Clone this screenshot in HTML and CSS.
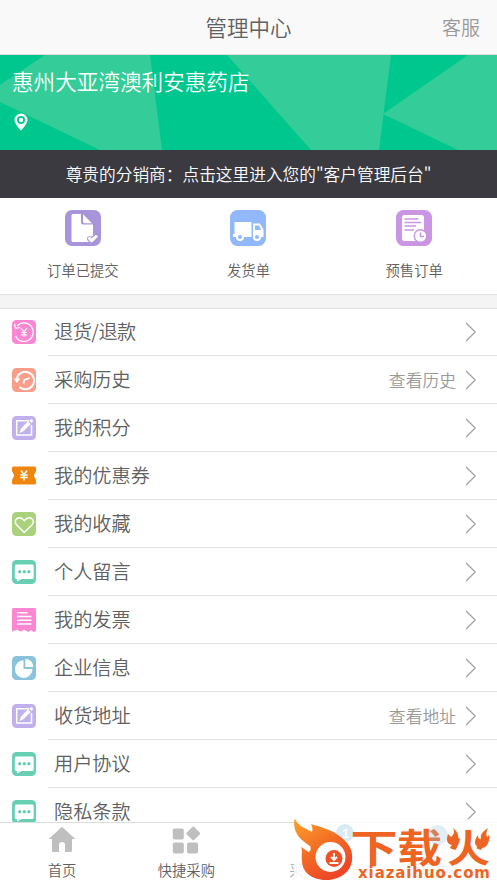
FILE: index.html
```html
<!DOCTYPE html>
<html lang="zh-CN">
<head>
<meta charset="utf-8">
<title>管理中心</title>
<link rel="stylesheet" href="styles.css">
</head>
<body>
<svg width="0" height="0" class="defs">
  <symbol id="chev" viewBox="0 0 12 20"><path d="M1.200 1 10.200 10 1.200 19" fill="none" stroke="#a2a2a2" stroke-width="1.200"/></symbol>
  <symbol id="edit" viewBox="0 0 24 24"><rect width="24" height="24" rx="4.500" fill="#c1b0eb"/><path d="M17 4.700H4.700v14.200h14.800V9" fill="none" stroke="#fff" stroke-width="1.500"/><path d="m7.500 17 1.300-4.300 7.200-7.400 2.700 2.700-7.300 7.300z" fill="#fff"/><path d="m17.300 4.700 1.200-1.200q1-.7 2 .3t.3 2l-1.200 1.300z" fill="#fff"/></symbol>
  <symbol id="chat" viewBox="0 0 24 24"><rect width="24" height="24" rx="4.500" fill="#67cfb4"/><path d="M4 4.500h16.200q1.500 0 1.500 1.500v11.500q0 1.500-1.500 1.500H9.500L5.500 21.500 4.700 19Q2.800 19 2.800 17.500V6Q2.800 4.500 4 4.500z" fill="#fff"/><g fill="#67cfb4"><circle cx="7.700" cy="11.700" r="1.700"/><circle cx="12.300" cy="11.700" r="1.700"/><circle cx="16.900" cy="11.700" r="1.700"/></g></symbol>
</svg>
<div class="app">
  <header class="top"><span></span><h1>管理中心</h1><a class="service">客服</a></header>
  <section class="shop">
    <svg class="facets" viewBox="0 0 497 95" preserveAspectRatio="none"><path fill="#34cd99" d="M45 0H150L162 95H100L0 47V30zM227 0H391L379 95H311zM468 0H497V95H458L383 59z"/></svg>
    <div class="shop-body">
      <h2>惠州大亚湾澳利安惠药店</h2>
      <svg class="pin" viewBox="0 0 14 18"><path fill="#fff" fill-rule="evenodd" d="M7 .5A6.500 6.500 0 0 0 .5 7C.5 11 7 17.500 7 17.500S13.500 11 13.500 7A6.500 6.500 0 0 0 7 .5zm0 2.500a4 4 0 1 1 0 8 4 4 0 0 1 0-8z"/><circle cx="7" cy="7" r="2.200" fill="#fff"/></svg>
    </div>
  </section>
  <div class="notice">尊贵的分销商：点击这里进入您的"客户管理后台"</div>
  <nav class="orders">
    <a><svg viewBox="0 0 36 36"><rect width="36" height="36" rx="7" fill="#a894d8"/><path d="M8 4h8v8.500q0 2 2 2h10V26l-2 .5q-4-1-4 2.500 0 1.500 2 3H8q-1.500 0-1.500-1.500v-25Q6.500 4 8 4z" fill="#fff"/><path d="m18 4.200 9 9h-7.500q-1.500 0-1.500-1.500zM23 28q1.500-2 3.500.5l4-3.500q2 0 2.500 1.500l-6 6q-4-2-4-4.500z" fill="#fff"/></svg><span>订单已提交</span></a>
    <a><svg viewBox="0 0 36 36"><rect width="36" height="36" rx="7.500" fill="#90b8fa"/><path d="M4.500 12h17v15H3v-3h1.500zM23 13.500h7l3.500 6V27H23z" fill="#fff"/><path d="M25 15.500h4l2.200 4.500H25z" fill="#90b8fa"/><g fill="#90b8fa" stroke="#fff" stroke-width="2"><circle cx="10" cy="27" r="3"/><circle cx="27" cy="27" r="3"/></g></svg><span>发货单</span></a>
    <a><svg viewBox="0 0 36 36"><rect width="36" height="36" rx="7.500" fill="#ca96e3"/><rect x="6" y="5" width="22" height="26" rx="2.500" fill="#fff"/><path d="M8.500 9h14M8.500 12.500H25M8.500 16H20M8.500 20h9.500" stroke="#ca96e3" stroke-width="1.400"/><circle cx="24.500" cy="26" r="7" fill="#ca96e3"/><circle cx="24.500" cy="26" r="5.600" fill="#fff"/><path d="M24.500 22.500V26.500H28" fill="none" stroke="#ca96e3" stroke-width="1.500"/></svg><span>预售订单</span></a>
  </nav>
  <main class="menu">
    <a class="row"><svg class="ico" viewBox="0 0 24 24"><rect width="24" height="24" rx="4.500" fill="#fb86d2"/><path d="M5.200 5.800A9.300 9.300 0 1 1 3.500 16M2.500 3.800 3.500 8.300l4.500-.8" fill="none" stroke="#fff" stroke-width="1.200"/><path d="m9 8 3 4 3-4M12 12v5M9 12.500h6M9 14.800h6" fill="none" stroke="#fff" stroke-width="1.200"/></svg><div class="cell"><b class="tight">退货/退款</b><svg class="chev"><use href="#chev"/></svg></div></a>
    <a class="row"><svg class="ico" viewBox="0 0 24 24"><rect width="24" height="24" rx="4.500" fill="#fb9d89"/><path d="M4.800 11A8.700 8.700 0 1 1 7.500 19" fill="none" stroke="#fff" stroke-width="2"/><path d="M1.500 10.500h7L4.800 15z" fill="#fff"/><path d="m11.500 15.500 1-3.500 5-2" fill="none" stroke="#fff" stroke-width="1.800"/></svg><div class="cell"><b>采购历史</b><i>查看历史</i><svg class="chev"><use href="#chev"/></svg></div></a>
    <a class="row"><svg class="ico"><use href="#edit"/></svg><div class="cell"><b>我的积分</b><svg class="chev"><use href="#chev"/></svg></div></a>
    <a class="row"><svg class="ico" viewBox="0 0 24 24"><path d="M1.500 2.500h21Q24 2.500 24 4v3.500l-1 1v1l-1 1v2l1 1v1l1 1V19q0 1.500-1.500 1.500h-21Q0 20.500 0 19v-3.500l1-1v-1l1-1v-2l-1-1v-1l-1-1V4Q0 2.500 1.500 2.500z" fill="#ef860e"/><path d="m9 6.500 3 4 3-4M12 10.500v6M8.300 11h7.400M8.300 13.500h7.400" fill="none" stroke="#fff" stroke-width="1.500"/></svg><div class="cell"><b>我的优惠券</b><svg class="chev"><use href="#chev"/></svg></div></a>
    <a class="row"><svg class="ico" viewBox="0 0 24 24"><rect width="24" height="24" rx="4.500" fill="#aad27d"/><path d="M12.300 20.500 4.500 12.800C1.500 9 4.500 5.700 7.500 5.700q2.500 0 4.800 3 2.300-3 4.800-3c3 0 6 3.300 3 7.100z" fill="none" stroke="#fff" stroke-width="1.400"/></svg><div class="cell"><b>我的收藏</b><svg class="chev"><use href="#chev"/></svg></div></a>
    <a class="row"><svg class="ico"><use href="#chat"/></svg><div class="cell"><b>个人留言</b><svg class="chev"><use href="#chev"/></svg></div></a>
    <a class="row"><svg class="ico" viewBox="0 0 24 24"><path d="M1.500 0h21Q24 0 24 1.500V23l-2.500 1-2.500-2-2.500 2-2-1-2.500-1.500-2.500 2-2.500-.5-2-1.500-2 1.500L2.500 22 0 24V1.500Q0 0 1.500 0z" fill="#fb86d2"/><path d="M5 4.700h10.500M5 8.500h14.500M5 12.200h14.500M5 16h14.500" stroke="#fff" stroke-width="1.400"/></svg><div class="cell"><b>我的发票</b><svg class="chev"><use href="#chev"/></svg></div></a>
    <a class="row"><svg class="ico" viewBox="0 0 24 24"><rect width="24" height="24" rx="4.500" fill="#89c4dc"/><path d="M11.500 4.300V13H20.500A8.800 8.800 0 1 1 11.500 4.300z" fill="#fff"/><path d="M13.300 3v8h8A8 8 0 0 0 13.300 3z" fill="#fff"/></svg><div class="cell"><b>企业信息</b><svg class="chev"><use href="#chev"/></svg></div></a>
    <a class="row"><svg class="ico"><use href="#edit"/></svg><div class="cell"><b>收货地址</b><i>查看地址</i><svg class="chev"><use href="#chev"/></svg></div></a>
    <a class="row"><svg class="ico"><use href="#chat"/></svg><div class="cell"><b>用户协议</b><svg class="chev"><use href="#chev"/></svg></div></a>
    <a class="row"><svg class="ico"><use href="#chat"/></svg><div class="cell"><b>隐私条款</b><svg class="chev"><use href="#chev"/></svg></div></a>
  </main>
  <footer class="tabs">
    <a><svg viewBox="0 0 28 28"><path d="M14 .7 27.300 13H24v11.500q0 1.500-1.500 1.500H17v-7.500q0-2.500-3-2.500t-3 2.500V26H5.500Q4 26 4 24.500V13H.7z" fill="#bfbfbf"/></svg><span>首页</span></a>
    <a><svg viewBox="0 0 28 28"><g fill="#bfbfbf"><rect x=".8" y="2.500" width="11" height="11" rx="1.700"/><rect x=".8" y="16.500" width="11" height="11" rx="1.700"/><rect x="15" y="16.500" width="11" height="11" rx="1.700"/><rect x="16" y="2.200" width="10.500" height="10.500" rx="1.500" transform="rotate(45 21.250 7.450)"/></g></svg><span>快捷采购</span></a>
    <a class="faint"><span>采购车</span></a>
    <a class="faint"><span>管理中心</span></a>
  </footer>
</div>
<svg class="mark" viewBox="0 0 204 66">
  <defs><linearGradient id="fire" x1="0" y1="0" x2=".6" y2="1"><stop offset="0" stop-color="#fba22c"/><stop offset=".55" stop-color="#f36b24"/><stop offset="1" stop-color="#ec4527"/></linearGradient></defs>
  <rect x="1" y="2" width="203" height="64" fill="#fff" opacity=".84"/>
  <circle cx="52" cy="16" r="9" fill="#d8ebf5"/>
  <text class="count" x="49" y="21">1</text>
  <path d="M1.500 1.500C7 11 13 11 19 15c1-3 0-6-1-8 10 3 22 6 31 14 8 7 11 13 10 22-1 12-12 20-26 20-15 0-24-9-24-19-1-6 1-9-1-14 4 2 5 4 8 5 2-2 2-4 1-6C8 23-1 16 1.500 1.500z" fill="url(#fire)"/>
  <circle cx="37.500" cy="40" r="15" fill="#fff"/><circle cx="41" cy="41.500" r="8.500" fill="#ee5226"/>
  <path d="M41 36v6M38 40l3 3 3-3M36.500 46h9" fill="none" stroke="#fff" stroke-width="1.900"/>
  <g class="brand" transform="translate(0 44.500) scale(1 .9)"><text x="57.500" y="0" textLength="47" lengthAdjust="spacingAndGlyphs">下</text><text x="104" y="0" textLength="45" lengthAdjust="spacingAndGlyphs">载</text><text x="154" y="0" textLength="43" lengthAdjust="spacingAndGlyphs">火</text></g>
  <path d="M160 11c5 4 7 9 4 14-2 4-6 4-9 1-2-3-1-6 0-9l3 3c3-3 4-5 2-9zM195 11c-6 4-9 8-6 12-4-1-4-3-4-5-4 5-4 10 0 12 5 2 9 0 10-4 1-2 2-5 1-8l-2 2c-1-3-1-5 1-9z" fill="#ed6423"/>
  <circle cx="145" cy="18" r="10" fill="#9fc8d8" opacity=".3"/>
  <text class="domain" x="65" y="61" textLength="132" lengthAdjust="spacing">xiazaihuo.com</text>
</svg>
</body>
</html>
```
FILE: styles.css
```css
* { box-sizing: border-box; }
body { margin: 0; background: #fff; font-family: "Noto Sans CJK SC", sans-serif; font-weight: 350; color: #606060; overflow: hidden; }
h1, h2, b, i { margin: 0; font-weight: inherit; font-style: normal; }
.defs { position: absolute; }
.app { height: 883px; display: flex; flex-direction: column; }
.top { height: 55px; flex: none; display: grid; grid-template-columns: 1fr auto 1fr; align-items: center; background: #f9f9f9; border-bottom: 1px solid #e2dcdc; padding: 0 17px; }
.top h1 { font-size: 21.500px; line-height: 30px; }
.service { justify-self: end; font-size: 19px; line-height: 28px; color: #999; }
.shop { height: 95px; flex: none; display: grid; background: #00c78d; }
.facets, .shop-body { grid-area: 1 / 1; width: 100%; height: 95px; }
.shop-body { z-index: 1; padding: 10px 12px 0; color: #fff; }
.shop h2 { font-size: 21.600px; line-height: 32px; }
.pin { display: block; width: 14px; height: 18px; margin: 16px 0 0 2px; }
.notice { height: 48px; flex: none; background: #3a3a40; color: #fff; text-align: center; font-size: 16.700px; line-height: 48px; white-space: nowrap; }
.orders { height: 97px; flex: none; display: grid; grid-template-columns: repeat(3, 1fr); border-bottom: 1px solid #e2e2e2; }
.orders a { display: flex; flex-direction: column; align-items: center; padding-top: 12px; font-size: 14.300px; line-height: 22px; gap: 13px; }
.orders svg { width: 36px; height: 36px; }
.menu { flex: 1; min-height: 0; overflow: hidden; border-top: 13px solid #f4f4f4; box-shadow: inset 0 1px #e0e0e0; }
.row { display: flex; align-items: center; height: 48px; padding-left: 12px; gap: 12px; }
.ico { width: 24px; height: 24px; flex: none; }
.cell { flex: 1; height: 48px; display: flex; align-items: center; border-bottom: 1px solid #e2e2e2; padding: 0 20px 0 6px; font-size: 19.200px; line-height: 28px; }
.cell b { flex: 1; padding-bottom: 2px; }
.cell .tight { letter-spacing: -.5px; }
.cell i { font-size: 16.800px; color: #999; margin-right: 9px; }
.chev { width: 12px; height: 20px; }
.tabs { height: 61px; flex: none; display: grid; grid-template-columns: repeat(4, 1fr); border-top: 1px solid #ddd; background: #fff; }
.tabs a { display: flex; flex-direction: column; align-items: center; justify-content: flex-end; padding-bottom: 2px; font-size: 14.300px; line-height: 22px; gap: 5px; }
.tabs svg { width: 28px; height: 28px; }
.faint { color: #9fb0b9; }
.mark { position: absolute; left: 293px; top: 817px; width: 204px; height: 66px; }
.count { font: bold 13px "Liberation Sans", sans-serif; fill: #fff; }
.brand { font: 700 43px "Noto Sans CJK SC", sans-serif; fill: #ed6423; }
.domain { font: bold 15px "DejaVu Sans", sans-serif; fill: #ed6423; }
```
